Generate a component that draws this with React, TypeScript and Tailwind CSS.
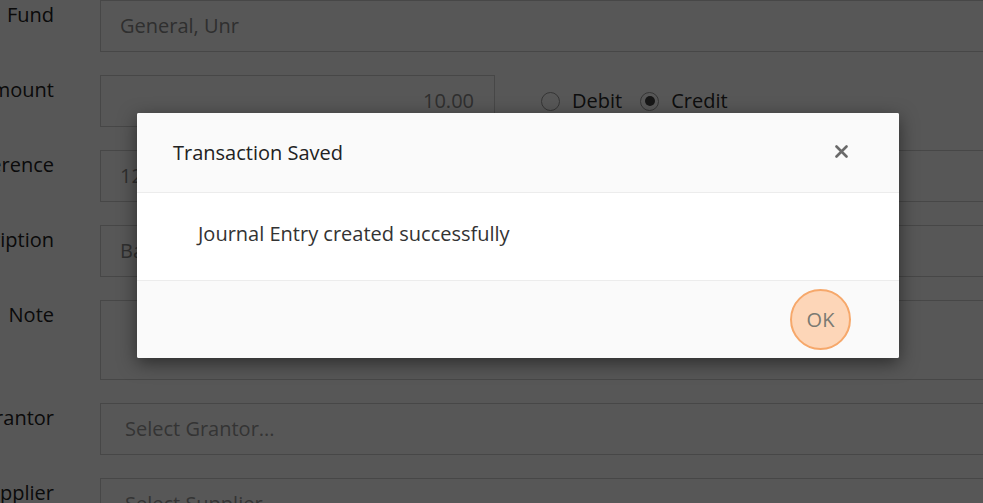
import React from 'react';

type Row = {
  label: string;
  value?: string;
  placeholder?: string;
  kind?: 'amount' | 'text' | 'area';
};

const rows: Row[] = [
  { label: 'Fund', value: 'General, Unr' },
  { label: 'Amount', value: '10.00', kind: 'amount' },
  { label: 'Reference', value: '1234' },
  { label: 'Description', value: 'Bank deposit' },
  { label: 'Note', kind: 'area' },
  { label: 'Grantor', placeholder: 'Select Grantor...' },
  { label: 'Supplier', placeholder: 'Select Supplier...' },
];

function Radio({ checked, label }: { checked?: boolean; label: string }) {
  return (
    <label className="flex items-center gap-[12px] text-[20px] text-[#2a2a2a]">
      <span className="flex h-[19px] w-[19px] items-center justify-center rounded-full border border-[#9a9a9a] bg-white">
        {checked && <span className="h-[10px] w-[10px] rounded-full bg-[#444]" />}
      </span>
      {label}
    </label>
  );
}

function FormRow({ row }: { row: Row }) {
  const boxBase = 'border border-[#cfcfcf] bg-white text-[20px]';
  return (
    <div className="mb-[23px] flex">
      <div className="flex w-[100px] shrink-0 justify-end whitespace-nowrap pr-[46px] pt-[1px] text-[20px] leading-[28px] text-[#222]">
        {row.label}
      </div>
      {row.kind === 'amount' ? (
        <div className="flex items-center">
          <div className={`${boxBase} flex h-[52px] w-[395px] items-center justify-end pr-[20px] text-[#8a8a8a]`}>
            {row.value}
          </div>
          <div className="ml-[46px] flex items-center gap-[18px]">
            <Radio label="Debit" />
            <Radio label="Credit" checked />
          </div>
        </div>
      ) : row.kind === 'area' ? (
        <div className={`${boxBase} h-[80px] flex-1`} />
      ) : (
        <div className={`${boxBase} flex h-[52px] flex-1 items-center pl-[19px] text-[#8a8a8a]`}>
          {row.value ?? <span className="pl-[5px] text-[#999]">{row.placeholder}</span>}
        </div>
      )}
    </div>
  );
}

export default function App() {
  return (
    <div className="relative h-[503px] w-[983px] overflow-hidden bg-white font-['Open_Sans',sans-serif]">
      <div className="w-[1100px]">
        {rows.map((row) => (
          <FormRow key={row.label} row={row} />
        ))}
      </div>

      <div className="absolute inset-0 bg-black/[0.66]" />

      <div className="absolute left-[137px] top-[113px] w-[762px] overflow-hidden rounded-[2px] bg-white shadow-[0_5px_18px_rgba(0,0,0,0.5)]">
        <div className="flex h-[80px] items-center justify-between border-b border-[#ececec] bg-[#fafafa] pl-[36px] pr-[51px]">
          <h2 className="text-[20px] font-medium text-[#222]">Transaction Saved</h2>
          <svg width="13" height="13" viewBox="0 0 13 13" className="mt-[-2px]">
            <path d="M1.5 1.5 L11.5 11.5 M11.5 1.5 L1.5 11.5" stroke="#6a6a6a" strokeWidth="2.6" strokeLinecap="round" />
          </svg>
        </div>
        <div className="flex h-[87px] items-center pb-[6px] pl-[61px] text-[20px] text-[#333]">
          Journal Entry created successfully
        </div>
        <div className="flex h-[78px] items-center justify-end border-t border-[#ececec] bg-[#fafafa] pr-[48px]">
          <button className="flex h-[61px] w-[61px] items-center justify-center rounded-full border-2 border-[#f6a86b] bg-[#fdd6b8] text-[20px] text-[#7a7a72]">
            OK
          </button>
        </div>
      </div>
    </div>
  );
}
